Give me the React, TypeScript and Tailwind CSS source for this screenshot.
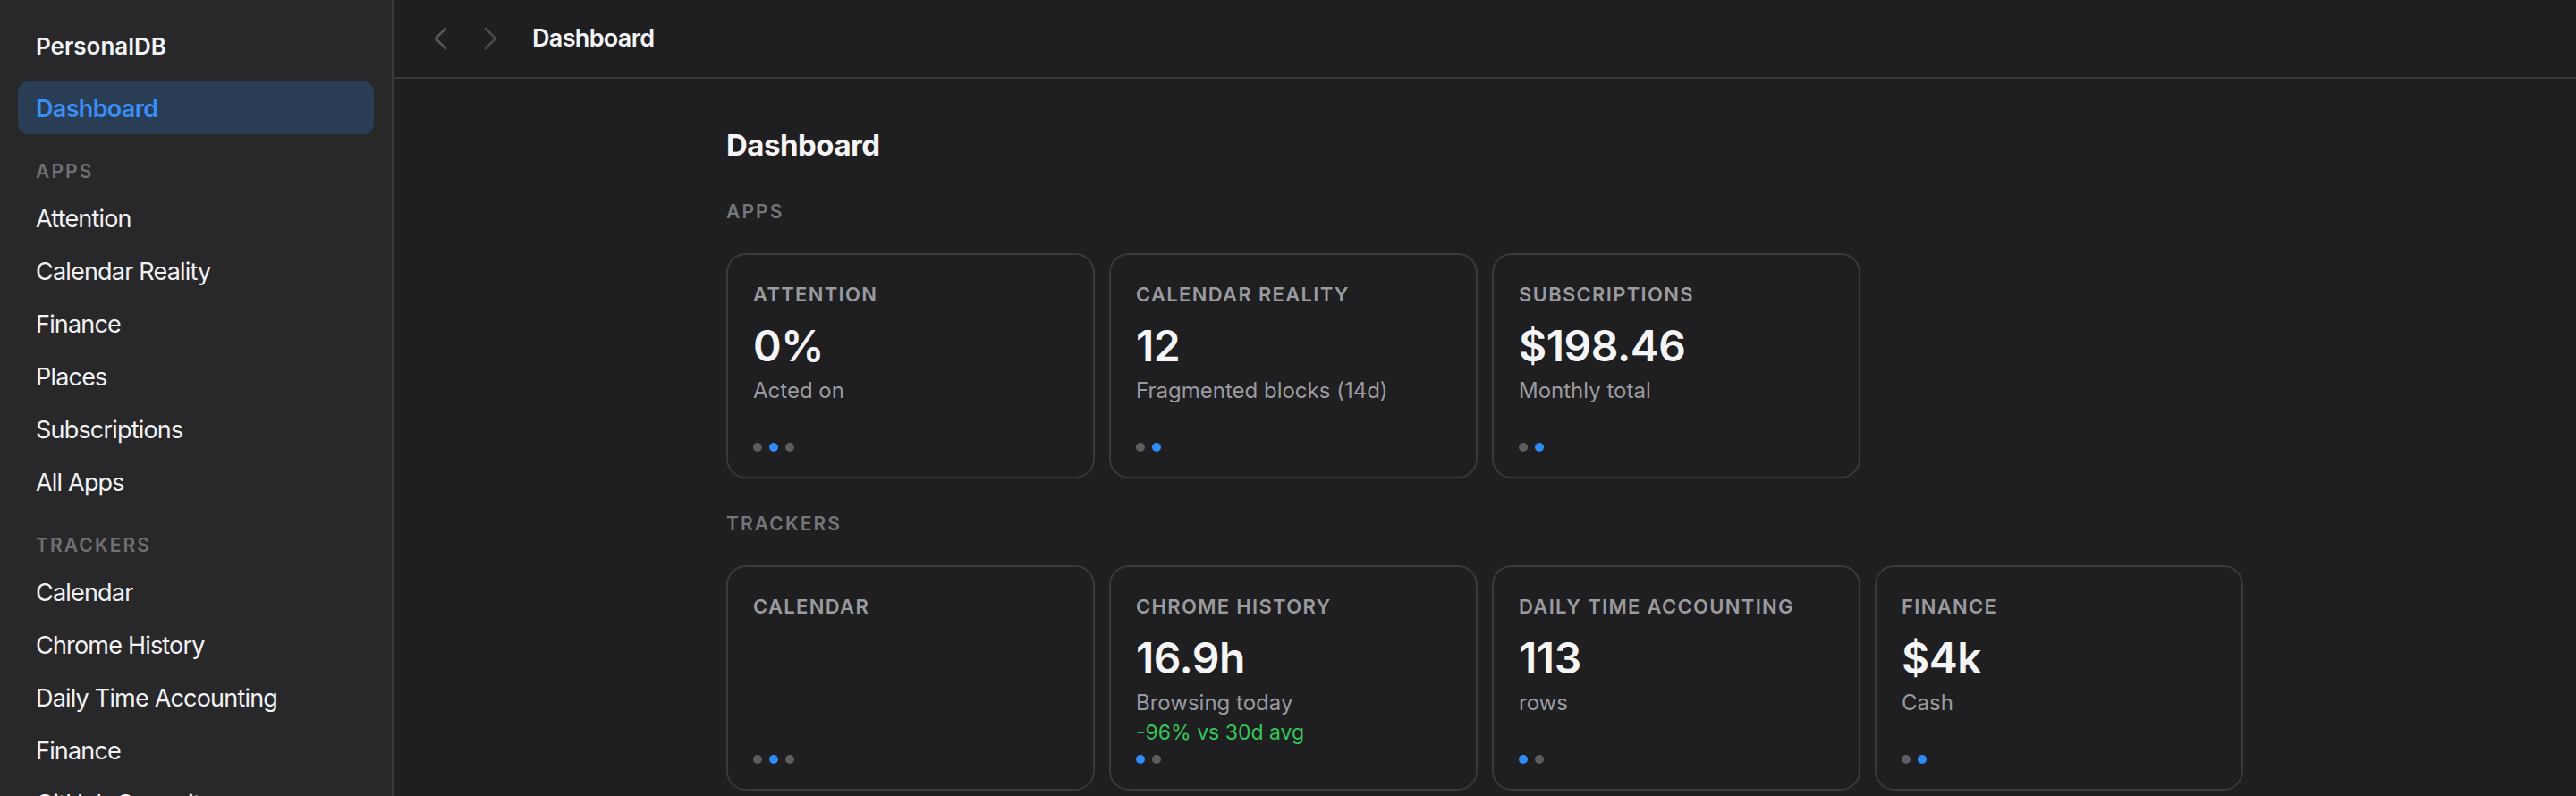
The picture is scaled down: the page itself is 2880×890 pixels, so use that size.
import React from "react";

type Card = {
  label: string;
  value?: string;
  sub?: string;
  delta?: string;
  dots: number;
  active: number;
};

const apps: Card[] = [
  { label: "Attention", value: "0%", sub: "Acted on", dots: 3, active: 1 },
  { label: "Calendar Reality", value: "12", sub: "Fragmented blocks (14d)", dots: 2, active: 1 },
  { label: "Subscriptions", value: "$198.46", sub: "Monthly total", dots: 2, active: 1 },
];

const trackers: Card[] = [
  { label: "Calendar", dots: 3, active: 1 },
  { label: "Chrome History", value: "16.9h", sub: "Browsing today", delta: "-96% vs 30d avg", dots: 2, active: 0 },
  { label: "Daily Time Accounting", value: "113", sub: "rows", dots: 2, active: 0 },
  { label: "Finance", value: "$4k", sub: "Cash", dots: 2, active: 1 },
];

const appLinks = ["Attention", "Calendar Reality", "Finance", "Places", "Subscriptions", "All Apps"];
const trackerLinks = ["Calendar", "Chrome History", "Daily Time Accounting", "Finance", "GitHub Commits"];

function NavItem({ label }: { label: string }) {
  return (
    <div className="h-[59px] flex items-center px-[20px] pt-[4px] text-[27px] tracking-[-0.03em] text-[#f2f2f4] whitespace-nowrap">
      {label}
    </div>
  );
}

function SideLabel({ children }: { children: React.ReactNode }) {
  return (
    <div className="h-[32px] leading-[33px] px-[20px] text-[21px] font-semibold tracking-[0.1em] uppercase text-[#6f6f74]">
      {children}
    </div>
  );
}

function Sidebar() {
  return (
    <aside className="w-[440px] shrink-0 h-full bg-[#28282a] border-r-2 border-[#3a3a3c] px-[20px] pt-[34px] overflow-hidden">
      <div className="h-[36px] leading-[36px] px-[20px] text-[26px] font-semibold text-[#f5f5f7]">PersonalDB</div>
      <div className="mt-[21px] h-[59px] rounded-[12px] bg-[#293d55] flex items-center px-[20px] pt-[3px] text-[27px] font-semibold tracking-[-0.025em] text-[#3a8ff7]">
        Dashboard
      </div>
      <div className="mt-[25px] mb-[7px]">
        <SideLabel>Apps</SideLabel>
      </div>
      {appLinks.map((l) => (
        <NavItem key={l} label={l} />
      ))}
      <div className="mt-[25px] mb-[7px]">
        <SideLabel>Trackers</SideLabel>
      </div>
      {trackerLinks.map((l) => (
        <NavItem key={l} label={l} />
      ))}
    </aside>
  );
}

function Chevron({ dir, color }: { dir: "left" | "right"; color: string }) {
  return (
    <svg width="16" height="26" viewBox="0 0 16 26" fill="none">
      <path
        d={dir === "left" ? "M14 2 L3 13 L14 24" : "M2 2 L13 13 L2 24"}
        stroke={color}
        strokeWidth="2.6"
        strokeLinecap="round"
        strokeLinejoin="round"
      />
    </svg>
  );
}

function Dots({ count, active }: { count: number; active: number }) {
  return (
    <div className="mt-auto flex gap-[8px]">
      {Array.from({ length: count }).map((_, i) => (
        <span
          key={i}
          className={i === active ? "w-[10px] h-[10px] rounded-full bg-[#2f8cf6]" : "w-[10px] h-[10px] rounded-full bg-[#5e5e62]"}
        />
      ))}
    </div>
  );
}

function StatCard({ card }: { card: Card }) {
  return (
    <div className="h-[252px] rounded-[22px] border-2 border-[#39393c] bg-[#1f1f21] p-[28px] flex flex-col">
      <div className="h-[32px] leading-[32px] text-[22px] font-semibold tracking-[0.06em] uppercase text-[#9a9a9f] whitespace-nowrap">
        {card.label}
      </div>
      {card.value && (
        <div className="mt-[10px] h-[64px] leading-[64px] text-[48px] font-semibold tracking-[-0.01em] text-[#f5f5f7]">
          {card.value}
        </div>
      )}
      {card.sub && (
        <div className="mt-[2px] h-[32px] leading-[32px] text-[24px] text-[#9a9a9f] whitespace-nowrap">{card.sub}</div>
      )}
      {card.delta && (
        <div className="mt-[1px] h-[32px] leading-[32px] text-[23px] text-[#34c759] whitespace-nowrap">{card.delta}</div>
      )}
      <Dots count={card.dots} active={card.active} />
    </div>
  );
}

function Section({ title, cards }: { title: string; cards: Card[] }) {
  return (
    <section className="mt-[33px]">
      <div className="h-[32px] leading-[35px] text-[21px] font-semibold tracking-[0.1em] uppercase text-[#75757a]">
        {title}
      </div>
      <div className="mt-[32px] grid grid-cols-4 gap-[16px]">
        {cards.map((c) => (
          <StatCard key={c.label} card={c} />
        ))}
      </div>
    </section>
  );
}

export default function App() {
  return (
    <div className="flex h-[890px] w-full overflow-hidden bg-[#1f1f21] font-['Inter','Noto_Sans',sans-serif] antialiased">
      <Sidebar />
      <main className="flex-1 min-w-0 h-full flex flex-col">
        <header className="h-[88px] shrink-0 border-b-2 border-[#38383a] flex items-center pl-[32px]">
          <button className="w-[40px] h-[40px] flex items-center justify-center">
            <Chevron dir="left" color="#57575a" />
          </button>
          <button className="ml-[17px] w-[40px] h-[40px] flex items-center justify-center">
            <Chevron dir="right" color="#4b4b4e" />
          </button>
          <h2 className="ml-[26px] text-[27px] font-semibold tracking-[-0.025em] text-[#f5f5f7]">Dashboard</h2>
        </header>
        <div className="w-[1696px] mx-auto pt-[50px]">
          <h1 className="h-[48px] leading-[48px] text-[33px] font-bold tracking-[-0.015em] text-[#f5f5f7]">Dashboard</h1>
          <Section title="Apps" cards={apps} />
          <Section title="Trackers" cards={trackers} />
        </div>
      </main>
    </div>
  );
}
